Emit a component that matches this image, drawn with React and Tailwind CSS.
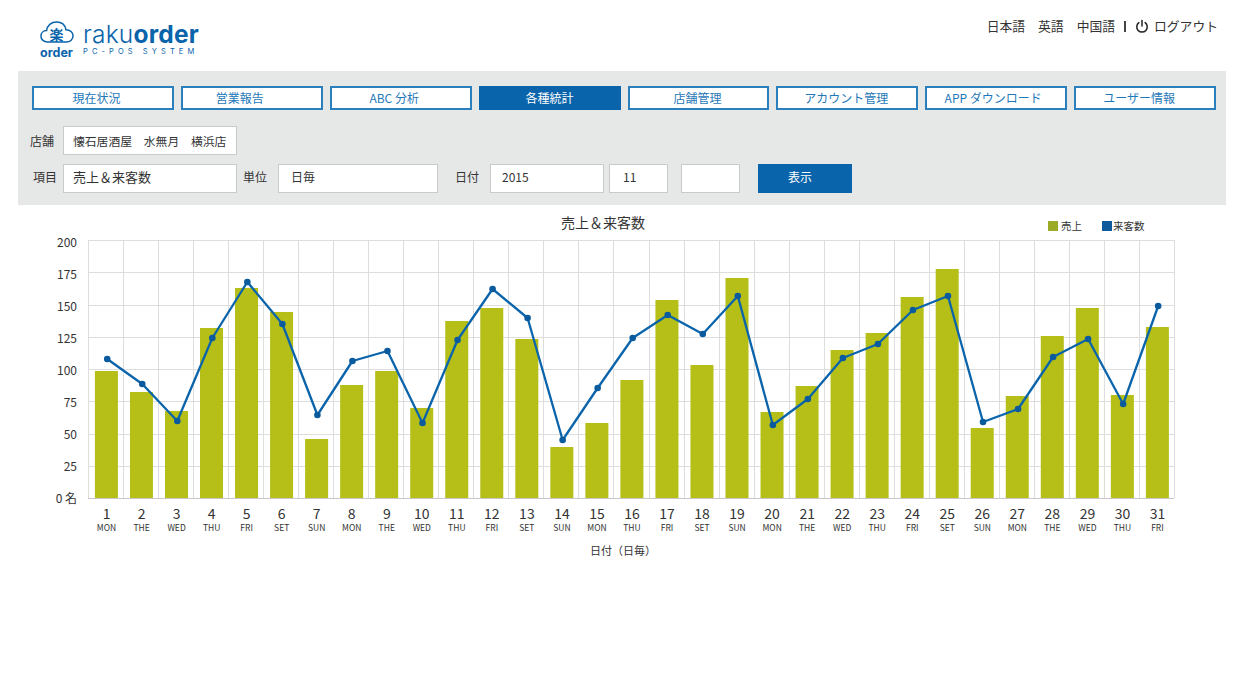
const FONT = '"Noto Sans CJK JP", "Noto Sans", sans-serif';

const navItems = [
  { label: '現在状況', pad: 'pr-[13px]' },
  { label: '営業報告', pad: 'pr-[24px]' },
  { label: 'ABC 分析', pad: 'pr-[13px]' },
  { label: '各種統計', pad: 'pr-0', active: true },
  { label: '店舗管理', pad: 'pr-[2px]' },
  { label: 'アカウント管理', pad: 'pr-[2px]' },
  { label: 'APP ダウンロード', pad: 'pr-[6px]' },
  { label: 'ユーザー情報', pad: 'pr-[12px]' },
];
const dows = ['MON', 'THE', 'WED', 'THU', 'FRI', 'SET', 'SUN', 'MON', 'THE', 'WED', 'THU', 'FRI', 'SET', 'SUN', 'MON', 'THU', 'FRI', 'SET', 'SUN', 'MON', 'THE', 'WED', 'THU', 'FRI', 'SET', 'SUN', 'MON', 'THE', 'WED', 'THU', 'FRI'];
const barTops = [371, 392, 411, 328, 288, 312, 439, 385, 371, 408, 321, 308, 339, 447, 423, 380, 300, 365, 278, 412, 386, 350, 333, 297, 269, 428, 396, 336, 308, 395, 327];
const lineYs = [359, 384, 421, 338, 282, 324, 415, 361, 351, 423, 340, 289, 318, 440, 388, 338, 315, 334, 296, 425, 399, 358, 344, 310, 296, 422, 409, 357, 339, 404, 306];
const yLabels = ['200', '175', '150', '125', '100', '75', '50', '25', '0 名'];

const PLOT_W = 1086;
const PLOT_H = 258;
const CELL = PLOT_W / 31;
const PLOT_TOP = 240;
const PLOT_BOTTOM = 498;

function Logo() {
  return (
    <div className="flex items-start gap-[9px] text-[#0a64ab]">
      <div className="flex flex-col items-center w-[35px]">
        <div className="relative w-[34px] h-[24px]">
          <svg viewBox="0 0 36 24" className="absolute inset-0 w-full h-full" fill="none" stroke="#0a64ab" strokeWidth="1.6">
            <path d="M8 22.5 C3.5 22.5 1 19.5 1 16.5 C1 13 3.5 10.5 7 10.5 C7.5 5 12 1.5 17.5 1.5 C22.5 1.5 26.5 4.5 27.5 9.5 C32 9.5 35 12.5 35 16 C35 19.8 32 22.5 28 22.5 Z" />
          </svg>
          <span className="absolute inset-0 flex items-center justify-center text-[14px] leading-none font-bold pt-[3px]">楽</span>
        </div>
        <span className="text-[12.5px] leading-[14px] font-bold mt-[2px]" style={{ fontFamily: 'Inter, sans-serif' }}>order</span>
      </div>
      <div className="flex flex-col pt-[2px]" style={{ fontFamily: 'Inter, sans-serif' }}>
        <div className="text-[24.5px] leading-[24px] tracking-[0.2px]">
          <span className="font-light">raku</span><span className="font-bold">order</span>
        </div>
        <span className="text-[7.5px] leading-[10px] mt-[1px] tracking-[4.1px] font-normal whitespace-nowrap">PC-POS SYSTEM</span>
      </div>
    </div>
  );
}

function Field({ className, children }) {
  return (
    <div className={`h-[29px] bg-white border border-[#c9caca] flex items-center text-[#333] ${className}`}>
      {children}
    </div>
  );
}

function Chart() {
  const points = lineYs.map((y, i) => [(i + 0.5) * CELL + 1.7, y - PLOT_TOP]);
  return (
    <div className="relative h-[350px]">
      <div className="absolute top-[7px] left-[561px] text-[14px] leading-[20px] text-[#333]">売上＆来客数</div>
      <div className="absolute top-[14px] left-[1048px] flex items-center text-[10.5px] leading-[14px] text-[#333]">
        <span className="w-[10px] h-[10px] bg-[#9bab25] mr-[3px]" />
        <span>売上</span>
        <span className="w-[10px] h-[10px] bg-[#0f5a9c] ml-[20px] mr-[1px]" />
        <span>来客数</span>
      </div>
      <div className="flex pt-[35px]">
        <div className="w-[88px] shrink-0 h-[256px] flex flex-col justify-between items-end pr-[11px] text-[12px] leading-[12px] text-[#333] mt-[2px]">
          {yLabels.map((l) => <span key={l} className="h-0 flex items-center">{l}</span>)}
        </div>
        <svg width={PLOT_W + 1} height={PLOT_H + 1} className="block shrink-0 overflow-visible">
          {yLabels.map((_, i) => (
            <line key={i} x1="0" x2={PLOT_W} y1={Math.round(i * 32.25) + 0.5} y2={Math.round(i * 32.25) + 0.5} stroke={i === 8 ? '#c9c5c9' : '#dedede'} strokeWidth="1" />
          ))}
          {Array.from({ length: 32 }, (_, i) => (
            <line key={i} x1={Math.round(i * CELL) + 0.5} x2={Math.round(i * CELL) + 0.5} y1="0" y2={PLOT_H} stroke="#dedede" strokeWidth="1" />
          ))}
          {barTops.map((top, i) => (
            <rect key={i} x={(i + 0.5) * CELL - 10.6} y={top - PLOT_TOP} width="23" height={PLOT_BOTTOM - top} fill="#b5bf18" />
          ))}
          <polyline points={points.map((p) => p.join(',')).join(' ')} fill="none" stroke="#0a64ab" strokeWidth="2.3" strokeLinejoin="round" />
          {points.map(([x, y], i) => <circle key={i} cx={x} cy={y} r="3.3" fill="#0a5a9e" />)}
        </svg>
      </div>
      <div className="ml-[89px] w-[1086px] grid grid-cols-[repeat(31,minmax(0,1fr))] pt-[5px] text-[#333]">
        {dows.map((dow, i) => (
          <div key={i} className="flex flex-col items-center">
            <span className="text-[14px] leading-[18px]">{i + 1}</span>
            <span className="text-[8.5px] leading-[11px]">{dow}</span>
          </div>
        ))}
      </div>
      <div className="absolute top-[337px] left-[590px] text-[11px] leading-[16px] text-[#333]">日付（日毎）</div>
    </div>
  );
}

export default function App() {
  return (
    <div className="w-[1246px] h-[674px] bg-white overflow-hidden" style={{ fontFamily: FONT }}>
      <header className="h-[71px] flex justify-between pl-[39px] pr-[28px] pt-[20px]">
        <Logo />
        <div className="flex items-center h-[14px] text-[12.8px] leading-[14px] text-[#333] mt-[-1px]">
          <span>日本語</span>
          <span className="ml-[13px]">英語</span>
          <span className="ml-[13px]">中国語</span>
          <span className="ml-[9px] w-[2px] h-[11px] bg-[#444]" />
          <svg viewBox="0 0 16 16" className="ml-[9px] w-[14px] h-[15px]" fill="none" stroke="#222" strokeWidth="1.7" strokeLinecap="round">
            <path d="M8 1v6.5" />
            <path d="M4.4 3.6a6 6 0 1 0 7.2 0" />
          </svg>
          <span className="ml-[5px]">ログアウト</span>
        </div>
      </header>

      <div className="ml-[18px] w-[1208px] h-[134px] bg-[#e6e7e7] pl-[14px] pr-[10px] pt-[15px]">
        <nav className="grid grid-cols-8 gap-[7px]">
          {navItems.map((item) => (
            <div
              key={item.label}
              className={`h-[24px] flex items-center justify-center text-[12px] border-2 ${item.pad} ${item.active ? 'bg-[#0a64ab] border-[#0a64ab] text-white' : 'bg-white border-[#2b7fbc] text-[#1f78b8]'}`}
            >
              {item.label}
            </div>
          ))}
        </nav>
        <div className="flex items-center mt-[16px] -ml-[2px] text-[12px] text-[#333]">
          <span className="w-[33px] pt-[1px]">店舗</span>
          <Field className="w-[174px] pl-[9px] whitespace-pre text-[11.8px]">懐石居酒屋　水無月　横浜店</Field>
        </div>
        <div className="flex items-center mt-[9px] text-[12px] text-[#333]">
          <span className="w-[31px] pl-[1px] pb-[3px]">項目</span>
          <Field className="w-[174px] pl-[9px] pb-[3px] text-[13px]">売上＆来客数</Field>
          <span className="ml-[6px] w-[35px] pb-[3px]">単位</span>
          <Field className="w-[160px] pl-[12px] pb-[3px] text-[12px]">日毎</Field>
          <span className="ml-[17px] w-[35px] pb-[3px]">日付</span>
          <Field className="w-[114px] pl-[11px] pb-[3px] text-[12px]">2015</Field>
          <Field className="w-[59px] ml-[5px] pl-[13px] pb-[3px] text-[12px]">11</Field>
          <Field className="w-[59px] ml-[13px]" />
          <div className="ml-[18px] w-[94px] h-[29px] pb-[3px] pr-[10px] bg-[#0a64ab] text-white flex items-center justify-center text-[12px]">表示</div>
        </div>
      </div>

      <Chart />
    </div>
  );
}
